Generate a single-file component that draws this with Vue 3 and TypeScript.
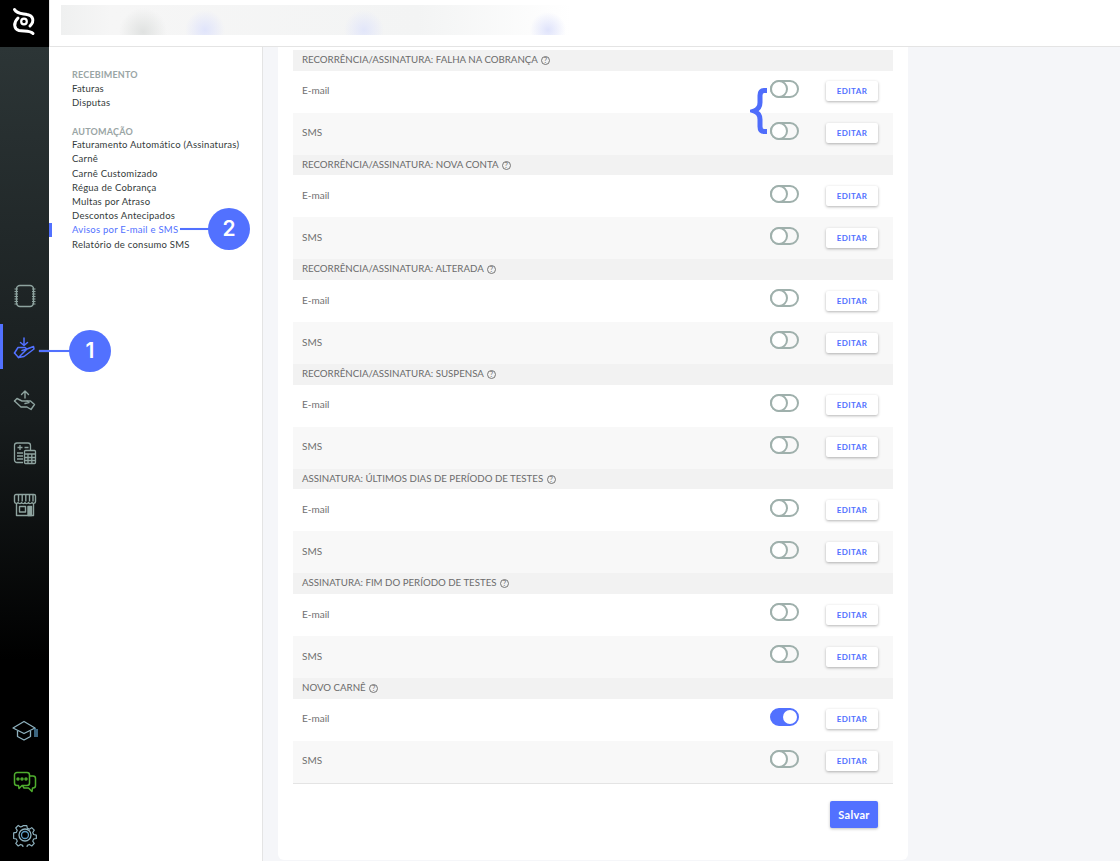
<script setup lang="ts">
interface Section { title: string; on?: boolean }
const sections: Section[] = [
  { title: 'RECORRÊNCIA/ASSINATURA: FALHA NA COBRANÇA' },
  { title: 'RECORRÊNCIA/ASSINATURA: NOVA CONTA' },
  { title: 'RECORRÊNCIA/ASSINATURA: ALTERADA' },
  { title: 'RECORRÊNCIA/ASSINATURA: SUSPENSA' },
  { title: 'ASSINATURA: ÚLTIMOS DIAS DE PERÍODO DE TESTES' },
  { title: 'ASSINATURA: FIM DO PERÍODO DE TESTES' },
  { title: 'NOVO CARNÊ', on: true },
]
const receb = ['Faturas', 'Disputas']
const auto = [
  'Faturamento Automático (Assinaturas)', 'Carnê', 'Carnê Customizado', 'Régua de Cobrança',
  'Multas por Atraso', 'Descontos Antecipados', 'Avisos por E-mail e SMS', 'Relatório de consumo SMS',
]
</script>

<template>
  <div class="app">
    <aside class="rail">
      <div class="logo">
        <svg width="48" height="47" viewBox="0 0 48 47" fill="none" stroke="#fff" stroke-width="3" stroke-linecap="round">
          <path d="M14.500 9.500C17 14 22 13.500 27 14.500C33 15.500 35 21 30 26" />
          <path d="M33 33.500C30 30 24 31.500 19 30.500C14 29 13 23 18 18" />
          <circle cx="24" cy="21.500" r="2.800" stroke-width="2.200" />
        </svg>
      </div>
      <nav class="rail-top">
        <a class="rail-item">
          <svg width="24" height="24" viewBox="0 0 24 24" fill="none" stroke="#8ea39f" stroke-width="1.400">
            <rect x="3.500" y="1.500" width="17" height="21" rx="3.500" />
            <path d="M1.500 5h3.500M1.500 7.500h3.500M1.500 10h3.500M1.500 12.500h3.500M1.500 15h3.500M1.500 17.500h3.500M1.500 20h3.500M19 5h3.500M19 7.500h3.500M19 10h3.500M19 12.500h3.500M19 15h3.500M19 17.500h3.500M19 20h3.500" stroke-width="1.200" />
          </svg>
        </a>
        <a class="rail-item active">
          <svg width="24" height="24" viewBox="0 0 24 24" fill="none" stroke="#5271ff" stroke-width="1.500" stroke-linejoin="round" stroke-linecap="round">
            <path d="M11 2v7.500M7.500 6.500L11 9.500l3.500-3" />
            <path d="M1.500 17L5 11.500h7l2 1.500-5 1.500M14 13l6.500-2.500L21 13l-10 7.500-5.500 1z" />
            <path d="M1.500 17l4 4.500" />
          </svg>
        </a>
        <a class="rail-item">
          <svg width="24" height="24" viewBox="0 0 24 24" fill="none" stroke="#8ea39f" stroke-width="1.400" stroke-linejoin="round" stroke-linecap="round">
            <path d="M12 10V3M8.500 6.500L12 3l3.500 3.500" />
            <path d="M1.500 13L4 10.500l5 2.500h5l2 1.500-4 1" />
            <path d="M14 13h3.500l4 3.500-3.500 5-4-2.500H8L1.500 13" />
          </svg>
        </a>
        <a class="rail-item">
          <svg width="24" height="24" viewBox="0 0 24 24" fill="none" stroke="#8ea39f" stroke-width="1.300">
            <path d="M10 21.500H4a2.500 2.500 0 0 1-2.500-2.500V4.500A2.500 2.500 0 0 1 4 2h11a2.500 2.500 0 0 1 2.500 2.500V9" />
            <path d="M4.500 6.500h5M7 4v5M11.500 6.500h4M4 12h6M4 15h6M4 18h6" />
            <rect x="11.500" y="9.500" width="11" height="13" rx="1" />
            <path d="M11.500 13h11M15 13v9.500M18.800 13v9.500M11.500 16.500h11M11.500 19.500h11" />
          </svg>
        </a>
        <a class="rail-item">
          <svg width="24" height="24" viewBox="0 0 24 24" fill="none" stroke="#8ea39f" stroke-width="1.400" stroke-linejoin="round">
            <path d="M3 1.500h18a1.500 1.500 0 0 1 1.500 1.500v5.500c0 2-3 2.500-3.500 1-.8 1.500-3 1.500-3.500 0-.8 1.500-3 1.500-3.500 0-.5 1.500-2.700 1.500-3.500 0-.5 1.500-2.700 1.500-3.500 0-.5 1.500-3.500 1-3.500-1V3A1.500 1.500 0 0 1 3 1.500z" />
            <path d="M5.500 1.500v7M9.200 1.500v7M12.800 1.500v7M16.500 1.500v7M20 1.500v7M3.500 11v11.500h17V11" />
            <rect x="6.500" y="13.500" width="6" height="5.500" />
            <rect x="15" y="13.500" width="3.500" height="9" fill="#8ea39f" />
          </svg>
        </a>
      </nav>
      <nav class="rail-bottom">
        <a class="rail-item">
          <svg width="26" height="24" viewBox="0 0 26 24" fill="none" stroke="#8fb2bf" stroke-width="1.300" stroke-linejoin="round">
            <path d="M12 2.500L1 9l11 5.500L23 9z" />
            <path d="M5.500 12v5.500L12 21l6.500-3.500V12" />
            <path d="M23 9v9M25 10v8" stroke="#5d9cc4" />
          </svg>
        </a>
        <a class="rail-item">
          <svg width="24" height="24" viewBox="0 0 24 24" fill="none" stroke="#4fae2e" stroke-width="1.500" stroke-linejoin="round">
            <path d="M4 1.500h10a2.500 2.500 0 0 1 2.500 2.500v8a2.500 2.500 0 0 1-2.500 2.500H9l-3 3-.5-3H4A2.500 2.500 0 0 1 1.500 12V4A2.500 2.500 0 0 1 4 1.500z" />
            <path d="M16.500 5H20a2.500 2.500 0 0 1 2.500 2.500v7A2.500 2.500 0 0 1 20 17h-.5l-.5 3.500-3.500-3.500H11l-1.500-2.500" />
            <circle cx="5" cy="8" r="1" /><circle cx="9" cy="8" r="1" /><circle cx="13" cy="8" r="1" />
          </svg>
        </a>
        <a class="rail-item">
          <svg width="24" height="24" viewBox="0 0 24 24" fill="none" stroke="#8fb2bf" stroke-width="1.300" stroke-linejoin="round">
            <path d="M10 1.500h4l.6 3 2.300 1 2.600-1.700 2.800 2.800-1.700 2.600 1 2.300 3 .6v3.800l-3 .6-1 2.300 1.700 2.600-2.800 2.800-2.600-1.700-2.300 1-.6 3h-4l-.6-3-2.300-1-2.600 1.700-2.800-2.800 1.700-2.600-1-2.300-3-.6V9.700l3-.6 1-2.300-1.700-2.600 2.800-2.800 2.600 1.700 2.300-1z" transform="translate(1.200 1.200) scale(.9)" />
            <circle cx="12" cy="12" r="6" />
            <circle cx="12" cy="12" r="3.500" stroke="#5d9cc4" />
          </svg>
        </a>
      </nav>
    </aside>

    <div class="right">
      <header class="topbar"><div class="blurred"></div></header>
      <div class="body">
        <nav class="subnav">
          <h4>RECEBIMENTO</h4>
          <a v-for="r in receb" :key="r">{{ r }}</a>
          <h4 class="second">AUTOMAÇÃO</h4>
          <a v-for="a in auto" :key="a" :class="{ current: a.startsWith('Avisos') }">{{ a }}</a>
        </nav>
        <main class="main">
          <section class="card">
            <div v-for="s in sections" :key="s.title" class="group">
              <div class="group-title">
                {{ s.title }} <span class="help">?</span>
              </div>
              <div class="row">
                <span class="label">E-mail</span>
                <span class="toggle" :class="{ on: s.on }"><i></i></span>
                <button class="edit">EDITAR</button>
              </div>
              <div class="row alt">
                <span class="label">SMS</span>
                <span class="toggle"><i></i></span>
                <button class="edit">EDITAR</button>
              </div>
            </div>
            <footer class="actions"><button class="save">Salvar</button></footer>
          </section>
        </main>
      </div>
    </div>

    <div class="callout one"><span class="wire"></span><span class="dot">1</span></div>
    <div class="callout two"><span class="wire"></span><span class="dot">2</span></div>
    <svg class="brace" width="18" height="48" viewBox="0 0 18 48" fill="none" stroke="#4f6dfb" stroke-width="5">
      <path d="M17 3.500h-3c-3 0-4 2-4 5v7c0 4-2 7-6 8.500 4 1.500 6 4.500 6 8.500v7c0 3 1 5 4 5h3" />
    </svg>
  </div>
</template>

<style>
html, body { margin: 0; background: #fff; }
</style>

<style scoped>
.app {
  position: relative;
  display: flex;
  width: 1120px;
  height: 861px;
  overflow: hidden;
  font-family: Lato, "Liberation Sans", sans-serif;
  color: #333;
}
.rail {
  flex: 0 0 49px;
  display: flex;
  flex-direction: column;
  background: linear-gradient(180deg, #2c3536 47px, #171c1d 420px, #000 660px);
}
.logo { height: 47px; background: #000; }
.logo svg { display: block; }
.rail-top { padding-top: 223px; }
.rail-bottom { margin-top: auto; }
.rail-item {
  position: relative;
  display: flex;
  align-items: center;
  justify-content: center;
  height: 52.200px;
}
.rail-item.active::before {
  content: "";
  position: absolute;
  left: 0;
  top: 2px;
  bottom: 5px;
  width: 3px;
  background: #5271ff;
}
.right { flex: 1; display: flex; flex-direction: column; min-width: 0; }
.topbar {
  flex: 0 0 47px;
  box-sizing: border-box;
  padding: 5px 0 0 11px;
  background: #fff;
  border-bottom: 1px solid #e4e4e4;
  border-left: 1px solid #e8e8e8;
}
.blurred {
  width: 510px;
  height: 30px;
  background:
    radial-gradient(circle at 144px 25px, #e0e4fb 0, rgba(224, 228, 251, 0) 20px),
    radial-gradient(circle at 303px 25px, #e2e6fa 0, rgba(226, 230, 250, 0) 20px),
    radial-gradient(circle at 487px 25px, #dfe3fb 0, rgba(223, 227, 251, 0) 18px),
    radial-gradient(circle at 82px 27px, #e0e2e1 0, rgba(224, 226, 225, 0) 24px),
    linear-gradient(90deg, #eff0f0 0, #f6f6f6 50px, #f3f4f4 70%, #ffffff 100%);
}
.body { flex: 1; display: flex; min-height: 0; }
.subnav {
  flex: 0 0 214px;
  box-sizing: border-box;
  padding-top: 21.300px;
  padding-left: 23px;
  background: #fff;
  border-right: 1px solid #e4e4e4;
  position: relative;
}
.subnav h4 {
  margin: 0;
  font-size: 9px;
  line-height: 13.200px;
  font-weight: 700;
  letter-spacing: .2px;
  color: #9aa5a5;
}
.subnav h4.second { margin-top: 15px; }
.subnav a {
  display: block;
  font-size: 9.500px;
  line-height: 14.200px;
  letter-spacing: .24px;
  color: #333a3a;
  white-space: nowrap;
}
.subnav a.current { color: #5271ff; position: relative; }
.subnav a.current::before {
  content: "";
  position: absolute;
  left: -23px;
  top: 0;
  width: 3px;
  height: 14px;
  background: #5271ff;
}
.main { flex: 1; background: #f5f6f9; padding-left: 15px; }
.card {
  width: 630px;
  height: 813px;
  box-sizing: border-box;
  padding: 3px 15px 0;
  background: #fff;
  border-radius: 0 0 6px 6px;
}
.group-title {
  height: 20.670px;
  line-height: 19px;
  padding-left: 9px;
  background: #f2f2f2;
  font-size: 9.700px;
  color: #6b6b6b;
  white-space: nowrap;
}
.help {
  display: inline-block;
  box-sizing: border-box;
  width: 9px;
  height: 9px;
  border: 1px solid #777;
  border-radius: 50%;
  font-size: 7.500px;
  line-height: 7px;
  text-align: center;
  vertical-align: 0;
  margin-left: 1px;
}
.row {
  display: flex;
  align-items: flex-start;
  height: 42px;
  padding: 0 15px 0 9px;
}
.row.alt { background: #f8f8f8; }
.group:last-of-type .row.alt { border-bottom: 1px solid #e4e4e4; }
.label {
  flex: 1;
  margin-top: 13.700px;
  font-size: 10px;
  line-height: 13px;
  color: #707070;
}
.toggle {
  box-sizing: border-box;
  display: flex;
  align-items: center;
  width: 29px;
  height: 18px;
  margin-top: 9.330px;
  border: 2px solid #9fb0ac;
  border-radius: 9px;
}
.toggle i {
  box-sizing: border-box;
  display: block;
  flex: none;
  width: 18px;
  height: 18px;
  margin-left: -2px;
  border: 2px solid #9fb0ac;
  border-radius: 50%;
  background: #fff;
}
.toggle.on { background: #5271ff; border-color: #5271ff; justify-content: flex-end; }
.toggle.on i { margin: 0; width: 14px; height: 14px; border: none; }
.edit {
  width: 52px;
  height: 20px;
  margin: 10.800px 0 0 27px;
  padding: 0;
  border: none;
  border-radius: 2px;
  background: #fff;
  box-shadow: 0 1px 3px rgba(0, 0, 0, .3);
  font: 700 8px/20px Lato, "Liberation Sans", sans-serif;
  letter-spacing: .4px;
  color: #5271ff;
}
.actions { display: flex; justify-content: flex-end; padding: 17px 15px 0 0; }
.save {
  width: 48px;
  height: 27px;
  padding: 0;
  border: none;
  border-radius: 2px;
  background: #5271ff;
  box-shadow: 0 1px 3px rgba(0, 0, 0, .25);
  font: 700 11px/27px Lato, "Liberation Sans", sans-serif;
  letter-spacing: .3px;
  color: #fff;
}
.callout { position: absolute; display: flex; align-items: center; }
.callout.one { left: 39px; top: 330px; }
.callout.two { left: 180px; top: 208px; }
.wire { display: block; width: 32px; height: 2px; margin-right: -2px; background: #5271ff; box-shadow: 0 0 1px #b9c6ff; }
.callout.two .wire { width: 30px; }
.dot {
  width: 42px;
  height: 42px;
  border-radius: 50%;
  background: #5271ff;
  color: #fff;
  font: 600 21px/42px Inter, "Liberation Sans", sans-serif;
  text-align: center;
}
.brace { position: absolute; left: 750px; top: 87px; }
</style>
